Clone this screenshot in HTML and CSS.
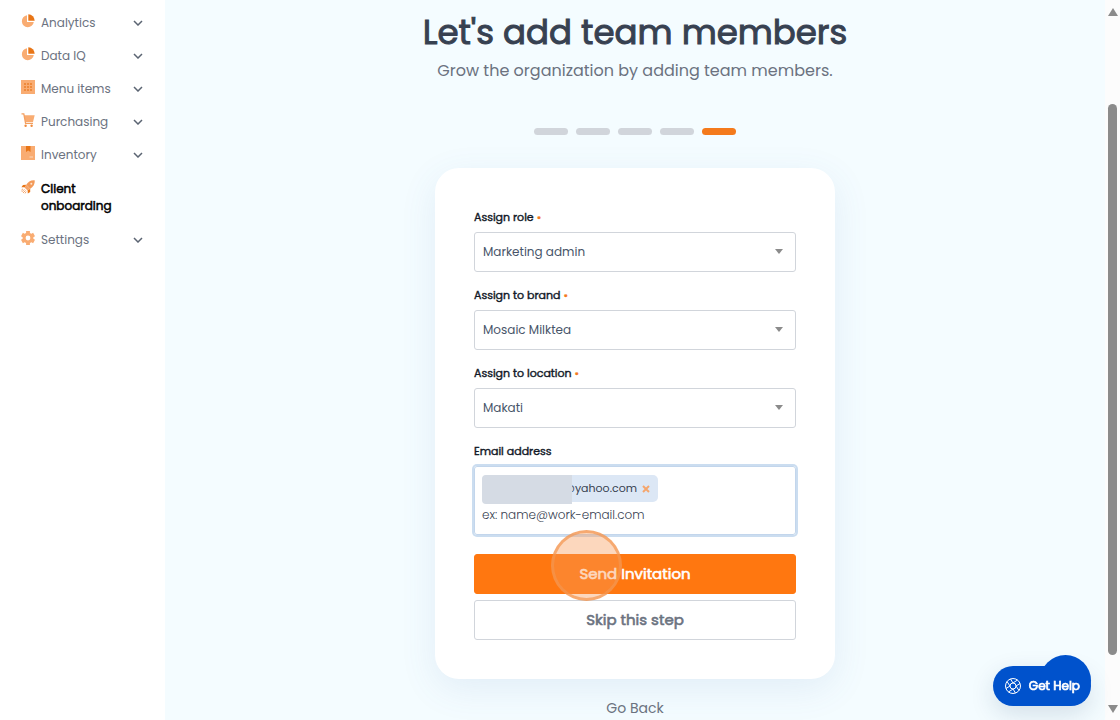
FILE: index.html
```html
<!DOCTYPE html>
<html lang="en">
<head>
    <meta charset="UTF-8">
    <meta name="viewport" content="width=device-width, initial-scale=1.0">
    <title>Client onboarding</title>
    <link rel="stylesheet" href="styles.css">
</head>
<body>
    <nav class="sidebar">
        <ul class="menu">
            <li><a href="#" class="menu-item">
                <svg class="icon" viewBox="0 0 14 14"><path d="M6 1.2a6 6 0 1 0 6.8 6.8H6z" fill="#f9ac72"/><path d="M7.3 0.3A6.4 6.4 0 0 1 13.7 6.7H7.3z" fill="#e87516"/></svg>
                <span>Analytics</span>
                <svg class="chevron" viewBox="0 0 10 6"><path d="M1 1l4 4 4-4"/></svg>
            </a></li>
            <li><a href="#" class="menu-item">
                <svg class="icon" viewBox="0 0 14 14"><path d="M6 1.2a6 6 0 1 0 6.8 6.8H6z" fill="#f9ac72"/><path d="M7.3 0.3A6.4 6.4 0 0 1 13.7 6.7H7.3z" fill="#e87516"/></svg>
                <span>Data IQ</span>
                <svg class="chevron" viewBox="0 0 10 6"><path d="M1 1l4 4 4-4"/></svg>
            </a></li>
            <li><a href="#" class="menu-item">
                <svg class="icon" viewBox="0 0 14 14"><path d="M0 0h14v14H0z" fill="#f9ac72"/><path d="M3 3h2v2H3zM6 3h2v2H6zM9 3h2v2H9zM3 6h2v2H3zM6 6h2v2H6zM9 6h2v2H9zM3 9h2v2H3zM6 9h2v2H6zM9 9h2v2H9z" fill="#ee8a3c"/></svg>
                <span>Menu items</span>
                <svg class="chevron" viewBox="0 0 10 6"><path d="M1 1l4 4 4-4"/></svg>
            </a></li>
            <li><a href="#" class="menu-item">
                <svg class="icon" viewBox="0 0 14 14"><path d="M3 2.2H13.700L12 9H4.5z" fill="#f9ac72"/><path d="M0.5 0.8h2.3L4.6 10.3H12" fill="none" stroke="#f3a061" stroke-width="1.3"/><circle cx="4.6" cy="12.7" r="1.2" fill="#f08a3c"/><circle cx="10.6" cy="12.7" r="1.2" fill="#f08a3c"/></svg>
                <span>Purchasing</span>
                <svg class="chevron" viewBox="0 0 10 6"><path d="M1 1l4 4 4-4"/></svg>
            </a></li>
            <li><a href="#" class="menu-item">
                <svg class="icon" viewBox="0 0 14 14"><path d="M0 0h14v14H0z" fill="#f9ac72"/><path d="M5 0h4.500v6L7.200 4.500 5 6z" fill="#e87516"/><path d="M8.500 11h3.500" stroke="#fcd9bd" stroke-width="1"/></svg>
                <span>Inventory</span>
                <svg class="chevron" viewBox="0 0 10 6"><path d="M1 1l4 4 4-4"/></svg>
            </a></li>
            <li><a href="#" class="menu-item active">
                <svg class="icon" viewBox="0 0 14 14"><path d="M13.700 0.300C9.500 0 7 2 5.300 4.800L9.200 8.700C12 7 14 4.500 13.700 0.300z" fill="#f39a59"/><path d="M5.300 4.800L2 4.900 0.400 7.200 3.800 7.300zM9.200 8.700V12L6.800 13.600 6.600 10.200z" fill="#e87516"/><path d="M5.300 4.800L9.200 8.700 6.600 10.600 3.400 7.400z" fill="#f6a468"/><circle cx="10.300" cy="3.700" r="1" fill="#fde3cf"/><path d="M3.400 9.300L0.800 11.900M4.500 10.400L2 13M2 8.800L0.400 10.200M5.200 11.600L4 13.400" stroke="#f39a59" stroke-width="0.900"/></svg>
                <span>Client onboarding</span>
            </a></li>
            <li><a href="#" class="menu-item">
                <svg class="icon" viewBox="0 0 14 14"><circle cx="7" cy="7" r="3.900" fill="none" stroke="#f9ac72" stroke-width="3"/><path d="M7 0v3M7 11v3M0.940 3.500L3.540 5M10.460 9L13.060 10.500M0.940 10.500L3.540 9M10.460 5L13.060 3.500" stroke="#f9ac72" stroke-width="3.800"/></svg>
                <span>Settings</span>
                <svg class="chevron" viewBox="0 0 10 6"><path d="M1 1l4 4 4-4"/></svg>
            </a></li>
        </ul>
    </nav>

    <main class="content">
        <h1>Let's add team members</h1>
        <p class="subtitle">Grow the organization by adding team members.</p>

        <div class="steps">
            <span class="step"></span>
            <span class="step"></span>
            <span class="step"></span>
            <span class="step"></span>
            <span class="step current"></span>
        </div>

        <form class="card">
            <div class="field">
                <label for="role">Assign role <span class="required">•</span></label>
                <div class="select">
                    <select id="role"><option>Marketing admin</option></select>
                </div>
            </div>
            <div class="field">
                <label for="brand">Assign to brand <span class="required">•</span></label>
                <div class="select">
                    <select id="brand"><option>Mosaic Milktea</option></select>
                </div>
            </div>
            <div class="field">
                <label for="location">Assign to location <span class="required">•</span></label>
                <div class="select">
                    <select id="location"><option>Makati</option></select>
                </div>
            </div>
            <div class="field">
                <label for="email">Email address</label>
                <div class="email-box">
                    <div class="chip">
                        <span>@yahoo.com</span>
                        <button type="button" class="remove" aria-label="Remove">
                            <svg viewBox="0 0 8 8"><path d="M1 1l6 6M7 1L1 7"/></svg>
                        </button>
                        <span class="mask"></span>
                    </div>
                    <input type="email" id="email" placeholder="ex: name@work-email.com">
                </div>
            </div>
            <div class="actions">
                <button type="submit" class="btn primary">Send Invitation</button>
                <button type="button" class="btn">Skip this step</button>
                <span class="click-mark"></span>
            </div>
        </form>

        <a href="#" class="back">Go Back</a>
    </main>

    <div class="scrollbar">
        <span class="arrow up"></span>
        <span class="track"><span class="thumb"></span></span>
        <span class="arrow down"></span>
    </div>

    <button class="help">
        <svg viewBox="0 0 18 18"><circle cx="9" cy="9" r="7.500"/><circle cx="9" cy="9" r="3"/><path d="M6.500 2L9 6l4.500-3M16 6.500L12 9l3 4.500M11.500 16L9 12l-4.500 3M2 11.500L6 9 3 4.500"/></svg>
        <span>Get Help</span>
    </button>
</body>
</html>
```
FILE: styles.css
```css
* {
    box-sizing: border-box;
}

body {
    margin: 0;
    display: flex;
    height: 100vh;
    overflow: hidden;
    font-family: Poppins, Inter, sans-serif;
    font-size: 12px;
    color: #374151;
    background-color: #f4fcff;
}

button, input, select {
    font-family: inherit;
}

/* sidebar */
.sidebar {
    flex: 0 0 165px;
    padding: 14px 22px 0 21px;
    background-color: #fff;
}

.menu {
    list-style: none;
    margin: 0;
    padding: 0;
    display: flex;
    flex-direction: column;
}

.menu-item {
    display: flex;
    align-items: flex-start;
    gap: 6px;
    padding-bottom: 16px;
    line-height: 17px;
    color: #6b7280;
    text-decoration: none;
}

.menu-item span {
    flex: 1;
}

.menu-item.active {
    padding-top: 1px;
    padding-bottom: 17px;
    color: #000;
    -webkit-text-stroke: 0.5px;
}

.menu-item.active span {
    flex: 0 1 80px;
}

.icon {
    width: 14px;
    height: 14px;
}

.chevron {
    width: 10px;
    height: 6px;
    align-self: center;
    fill: none;
    stroke: #5b6472;
    stroke-width: 1.5;
}

/* main area */
.content {
    flex: 1;
    display: flex;
    flex-direction: column;
    align-items: center;
}

h1 {
    margin: 8px 0 0;
    font-size: 34px;
    line-height: 48px;
    font-weight: 400;
    -webkit-text-stroke: 1px;
    color: #374151;
}

.subtitle {
    margin: 1px 0 0;
    font-size: 16px;
    line-height: 28px;
    color: #6b7280;
}

.steps {
    display: flex;
    gap: 8px;
    margin: 43px 0 33px;
}

.step {
    width: 34px;
    height: 7px;
    border-radius: 4px;
    background-color: #d1d5db;
}

.step.current {
    background-color: #f47a1c;
}

.card {
    width: 100%;
    max-width: 400px;
    flex-shrink: 0;
    padding: 41px 39px 39px;
    border-radius: 24px;
    background-color: #fff;
    box-shadow: 0 10px 36px rgba(70, 110, 180, 0.1);
    display: flex;
    flex-direction: column;
    gap: 15px;
}

.field {
    display: flex;
    flex-direction: column;
    gap: 7px;
}

.field label {
    font-size: 11px;
    line-height: 16px;
    -webkit-text-stroke: 0.4px;
    color: #111827;
}

.required {
    color: #f47a1c;
}

.select {
    position: relative;
}

.select::after {
    content: "";
    position: absolute;
    right: 13px;
    top: 17px;
    border: 4px solid transparent;
    border-top: 5px solid #8b8b8b;
    border-bottom: 0;
    pointer-events: none;
}

select {
    appearance: none;
    width: 100%;
    height: 40px;
    padding: 0 8px 1px;
    border: 1px solid #d1d5db;
    border-radius: 3px;
    background-color: #fff;
    font-size: 12px;
    color: #475569;
}

.email-box {
    display: flex;
    flex-direction: column;
    align-items: flex-start;
    padding: 8px 7px 7px;
    border: 1px solid #c3d6ec;
    border-radius: 3px;
    box-shadow: 0 0 0 2px #cbddf0;
}

.chip {
    position: relative;
    display: flex;
    align-items: center;
    gap: 5px;
    width: 176px;
    height: 27px;
    padding-right: 8px;
    justify-content: flex-end;
    border-radius: 5px;
    background-color: #dce7f5;
    font-size: 11px;
}

.mask {
    position: absolute;
    left: 0;
    top: 0;
    width: 90px;
    height: 29px;
    border-radius: 4px 0 0 4px;
    background-color: #d5dbe4;
}

.remove {
    display: flex;
    padding: 0;
    border: 0;
    background: none;
}

.remove svg {
    width: 8px;
    height: 8px;
    stroke: #f5a66d;
    stroke-width: 2;
}

.email-box input {
    width: 100%;
    height: 25px;
    padding: 0;
    border: 0;
    outline: none;
    background: none;
    font-size: 12px;
    font-weight: 300;
}

.email-box input::placeholder {
    color: #374151;
}

.actions {
    position: relative;
    display: flex;
    flex-direction: column;
    gap: 6px;
    margin-top: 4px;
}

.btn {
    height: 40px;
    padding: 0 6px 2px;
    border: 1px solid #d1d5db;
    border-radius: 3px;
    background-color: #fff;
    color: #6b7280;
    font-size: 15px;
    -webkit-text-stroke: 0.6px;
}

.btn.primary {
    border-color: #ff7710;
    background-color: #ff7710;
    color: #fff;
}

/* click highlight over the submit button */
.click-mark {
    position: absolute;
    left: 77px;
    top: -24px;
    width: 71px;
    height: 71px;
    border: 3px solid rgba(244, 150, 80, 0.7);
    border-radius: 50%;
    background-color: rgba(247, 156, 90, 0.4);
    pointer-events: none;
}

.back {
    margin-top: 19px;
    font-size: 14px;
    line-height: 20px;
    color: #6b7280;
    text-decoration: none;
}

/* scrollbar */
.scrollbar {
    flex: 0 0 15px;
    display: flex;
    flex-direction: column;
    align-items: center;
    padding: 8px 0 7px;
    background-color: #fcfcfc;
}

.arrow {
    border: 5px solid transparent;
}

.arrow.up {
    border-top: 0;
    border-bottom: 8px solid #8b8b8b;
}

.arrow.down {
    border-bottom: 0;
    border-top: 8px solid #8b8b8b;
}

.track {
    flex: 1;
    display: flex;
    padding: 88px 0 50px;
}

.thumb {
    width: 9px;
    border-radius: 5px;
    background-color: #8b8b8b;
}

/* help button */
.help {
    position: fixed;
    right: 29px;
    bottom: 14px;
    display: flex;
    align-items: center;
    gap: 7px;
    height: 40px;
    padding: 0 11px;
    border: 0;
    border-radius: 20px;
    background-color: #0052cc;
    color: #fff;
    font-size: 12px;
    -webkit-text-stroke: 0.7px;
    box-shadow: 0 8px 24px rgba(30, 60, 100, 0.15);
}

.help::before {
    content: "";
    position: absolute;
    right: 0;
    bottom: 0;
    width: 51px;
    height: 51px;
    border-radius: 50%;
    background-color: #0052cc;
}

.help svg {
    width: 18px;
    height: 18px;
    fill: none;
    stroke: #fff;
}

.help span {
    position: relative;
}
```
